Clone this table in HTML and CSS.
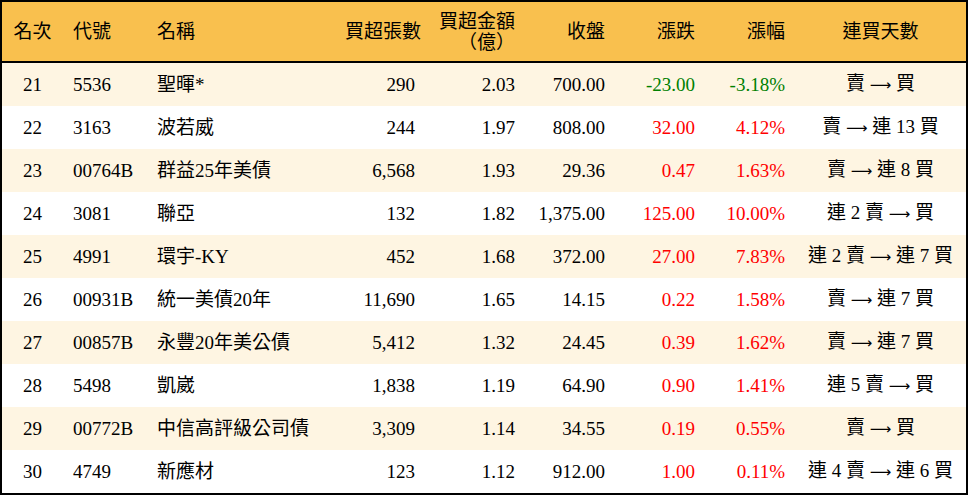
FILE: index.html
```html
<!DOCTYPE html>
<html lang="zh-Hant">
<head>
<meta charset="utf-8">
<link rel="stylesheet" href="styles.css">
</head>
<body>
<div class="board">
  <div class="row head">
    <div class="c ctr">名次</div>
    <div class="c">代號</div>
    <div class="c">名稱</div>
    <div class="c rt">買超張數</div>
    <div class="c rt two">買超金額<br><span class="unit">（億）</span></div>
    <div class="c rt">收盤</div>
    <div class="c rt">漲跌</div>
    <div class="c rt">漲幅</div>
    <div class="c ctr">連買天數</div>
  </div>
  <div class="row odd">
    <div class="c ctr">21</div><div class="c">5536</div><div class="c">聖暉*</div>
    <div class="c rt">290</div><div class="c rt">2.03</div><div class="c rt">700.00</div>
    <div class="c rt down">-23.00</div><div class="c rt down">-3.18%</div><div class="c ctr">賣 <span class="arrow">⟶</span> 買</div>
  </div>
  <div class="row">
    <div class="c ctr">22</div><div class="c">3163</div><div class="c">波若威</div>
    <div class="c rt">244</div><div class="c rt">1.97</div><div class="c rt">808.00</div>
    <div class="c rt up">32.00</div><div class="c rt up">4.12%</div><div class="c ctr">賣 <span class="arrow">⟶</span> 連 13 買</div>
  </div>
  <div class="row odd">
    <div class="c ctr">23</div><div class="c">00764B</div><div class="c">群益25年美債</div>
    <div class="c rt">6,568</div><div class="c rt">1.93</div><div class="c rt">29.36</div>
    <div class="c rt up">0.47</div><div class="c rt up">1.63%</div><div class="c ctr">賣 <span class="arrow">⟶</span> 連 8 買</div>
  </div>
  <div class="row">
    <div class="c ctr">24</div><div class="c">3081</div><div class="c">聯亞</div>
    <div class="c rt">132</div><div class="c rt">1.82</div><div class="c rt">1,375.00</div>
    <div class="c rt up">125.00</div><div class="c rt up">10.00%</div><div class="c ctr">連 2 賣 <span class="arrow">⟶</span> 買</div>
  </div>
  <div class="row odd">
    <div class="c ctr">25</div><div class="c">4991</div><div class="c">環宇-KY</div>
    <div class="c rt">452</div><div class="c rt">1.68</div><div class="c rt">372.00</div>
    <div class="c rt up">27.00</div><div class="c rt up">7.83%</div><div class="c ctr">連 2 賣 <span class="arrow">⟶</span> 連 7 買</div>
  </div>
  <div class="row">
    <div class="c ctr">26</div><div class="c">00931B</div><div class="c">統一美債20年</div>
    <div class="c rt">11,690</div><div class="c rt">1.65</div><div class="c rt">14.15</div>
    <div class="c rt up">0.22</div><div class="c rt up">1.58%</div><div class="c ctr">賣 <span class="arrow">⟶</span> 連 7 買</div>
  </div>
  <div class="row odd">
    <div class="c ctr">27</div><div class="c">00857B</div><div class="c">永豐20年美公債</div>
    <div class="c rt">5,412</div><div class="c rt">1.32</div><div class="c rt">24.45</div>
    <div class="c rt up">0.39</div><div class="c rt up">1.62%</div><div class="c ctr">賣 <span class="arrow">⟶</span> 連 7 買</div>
  </div>
  <div class="row">
    <div class="c ctr">28</div><div class="c">5498</div><div class="c">凱崴</div>
    <div class="c rt">1,838</div><div class="c rt">1.19</div><div class="c rt">64.90</div>
    <div class="c rt up">0.90</div><div class="c rt up">1.41%</div><div class="c ctr">連 5 賣 <span class="arrow">⟶</span> 買</div>
  </div>
  <div class="row odd">
    <div class="c ctr">29</div><div class="c">00772B</div><div class="c">中信高評級公司債</div>
    <div class="c rt">3,309</div><div class="c rt">1.14</div><div class="c rt">34.55</div>
    <div class="c rt up">0.19</div><div class="c rt up">0.55%</div><div class="c ctr">賣 <span class="arrow">⟶</span> 買</div>
  </div>
  <div class="row">
    <div class="c ctr">30</div><div class="c">4749</div><div class="c">新應材</div>
    <div class="c rt">123</div><div class="c rt">1.12</div><div class="c rt">912.00</div>
    <div class="c rt up">1.00</div><div class="c rt up">0.11%</div><div class="c ctr">連 4 賣 <span class="arrow">⟶</span> 連 6 買</div>
  </div>
</div>
</body>
</html>
```

FILE: styles.css
```css
html, body {
  margin: 0;
  padding: 0;
  background: #ffffff;
}

body {
  font-family: "Liberation Serif", "Noto Sans CJK TC", serif;
  font-size: 19px;
  color: #000000;
}

.board {
  width: 964px;
  border: 2px solid #000000;
}

.row {
  display: grid;
  grid-template-columns: 61px 84px 188px 90px 100px 90px 90px 90px 171px;
  height: 43px;
  align-items: center;
  background: #ffffff;
}

.row.odd {
  background: #fef5e2;
}

.row.head {
  height: 59px;
  background: #f9c04e;
  border-bottom: 2px solid #000000;
}

.c {
  padding: 0 10px;
  white-space: nowrap;
  line-height: 21px;
}

.ctr {
  text-align: center;
  padding: 0;
}

.rt {
  text-align: right;
}

.down {
  color: #008000;
}

.up {
  color: #ff0000;
}

.arrow {
  font-family: "DejaVu Sans", sans-serif;
  font-size: 15px;
  letter-spacing: 0;
}
```
